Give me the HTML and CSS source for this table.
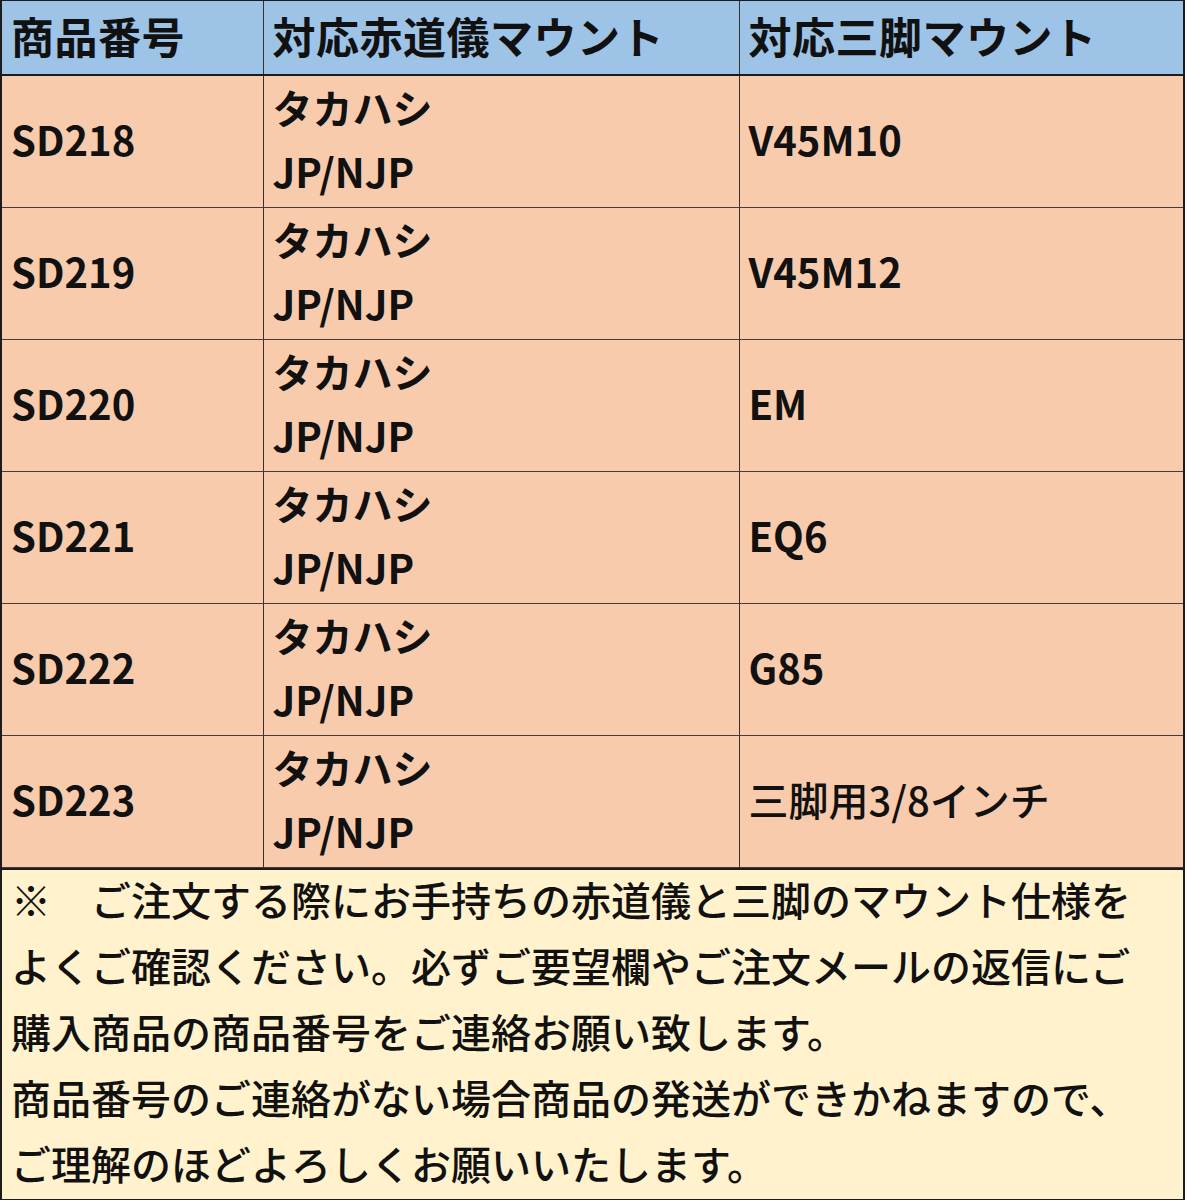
FILE: index.html
```html
<!DOCTYPE html>
<html lang="ja">
<head>
<meta charset="utf-8">
<link rel="stylesheet" href="styles.css">
</head>
<body>
<div class="sheet">
  <table class="grid">
    <colgroup>
      <col class="c1"><col class="c2"><col class="c3">
    </colgroup>
    <thead>
      <tr class="head">
        <th><div class="v">商品番号</div></th>
        <th><div class="v">対応赤道儀マウント</div></th>
        <th><div class="v">対応三脚マウント</div></th>
      </tr>
    </thead>
    <tbody>
      <tr><td><div class="v">SD218</div></td><td><div class="v">タカハシ<br>JP/NJP</div></td><td><div class="v">V45M10</div></td></tr>
      <tr><td><div class="v">SD219</div></td><td><div class="v">タカハシ<br>JP/NJP</div></td><td><div class="v">V45M12</div></td></tr>
      <tr><td><div class="v">SD220</div></td><td><div class="v">タカハシ<br>JP/NJP</div></td><td><div class="v">EM</div></td></tr>
      <tr><td><div class="v">SD221</div></td><td><div class="v">タカハシ<br>JP/NJP</div></td><td><div class="v">EQ6</div></td></tr>
      <tr><td><div class="v">SD222</div></td><td><div class="v">タカハシ<br>JP/NJP</div></td><td><div class="v">G85</div></td></tr>
      <tr class="last"><td><div class="v">SD223</div></td><td><div class="v">タカハシ<br>JP/NJP</div></td><td class="plain"><div class="v">三脚用3/8インチ</div></td></tr>
    </tbody>
  </table>
  <div class="note">
    <p>※　ご注文する際にお手持ちの赤道儀と三脚のマウント仕様を<br>よくご確認ください。必ずご要望欄やご注文メールの返信にご<br>購入商品の商品番号をご連絡お願い致します。<br>商品番号のご連絡がない場合商品の発送ができかねますので、<br>ご理解のほどよろしくお願いいたします。</p>
  </div>
</div>
</body>
</html>
```

FILE: styles.css
```css
html, body {
  margin: 0;
  padding: 0;
  background: #ffffff;
}

body {
  font-family: "Noto Sans CJK JP", "Noto Sans", sans-serif;
  color: #111111;
}

.sheet {
  width: 1181px;
  border: 2px solid #1c1c1c;
  border-top-width: 1px;
  background: #ffffff;
}

.grid {
  width: 100%;
  border-collapse: collapse;
  table-layout: fixed;
}

.c1 { width: 261px; }
.c2 { width: 476px; }
.c3 { width: auto; }

.grid th,
.grid td {
  border-right: 1px solid #3a302a;
  border-bottom: 1px solid #4a3c34;
  padding: 0 0 0 9px;
  text-align: left;
  vertical-align: middle;
  white-space: nowrap;
}

.grid th:last-child,
.grid td:last-child {
  border-right: none;
}

.v {
  margin-top: -6px;
}

.head th {
  height: 73px;
  background: #9dc3e6;
  font-size: 43px;
  font-weight: 700;
  line-height: 72px;
  letter-spacing: 0.5px;
  border-bottom: 2px solid #1c1c1c;
}

.grid td {
  height: 131px;
  background: #f8cbad;
  font-size: 40px;
  font-weight: 700;
  line-height: 64px;
}

.grid td.plain {
  font-weight: 500;
}

.note {
  display: flow-root;
  background: #fff2cc;
  border-top: 2px solid #1c1c1c;
  padding: 0 0 3px 9px;
}

.note p {
  margin: -4px 0 0 0;
  font-size: 40px;
  font-weight: 500;
  line-height: 66px;
  white-space: nowrap;
}
```
